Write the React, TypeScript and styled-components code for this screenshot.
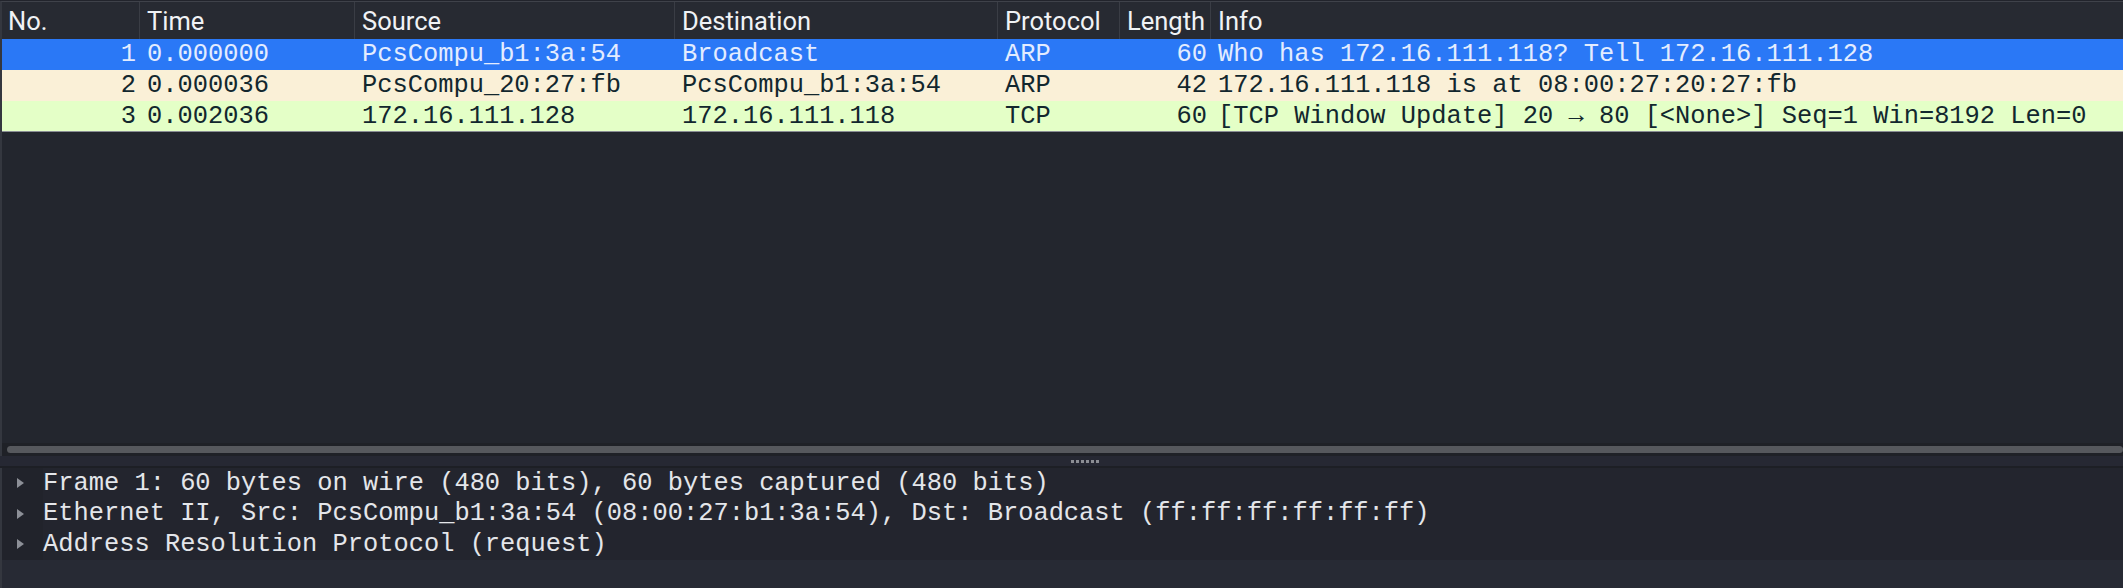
import styled, { createGlobalStyle } from "styled-components";

const GlobalStyle = createGlobalStyle`
    html, body {
        margin: 0;
        padding: 0;
        background: #22242c;
        overflow: hidden;
    }
`;

const COLUMNS = "137px 215px 320px 323px 122px 91px 1fr";

const Page = styled.div`
    width: 2123px;
    height: 588px;
    display: flex;
    flex-direction: column;
    background: #22242c;
    padding-top: 1px;
    box-sizing: border-box;
`;

const ListPane = styled.div`
    height: 455px;
    display: flex;
    flex-direction: column;
    border-top: 1px solid #3f424a;
    border-left: 2px solid #34373f;
    background: #23262e;
    box-sizing: border-box;
`;

const Header = styled.div`
    display: grid;
    grid-template-columns: ${COLUMNS};
    height: 37px;
    background: #272a32;
`;

const HeaderCell = styled.div<{ $first?: boolean }>`
    display: flex;
    align-items: center;
    padding-left: ${(p) => (p.$first ? "6px" : "7px")};
    border-left: ${(p) => (p.$first ? "none" : "1px solid #3a3d45")};
    font-family: Roboto, "Noto Sans", sans-serif;
    font-size: 25.5px;
    color: #f0f2f5;
    white-space: nowrap;
    overflow: hidden;
`;

const Rows = styled.div`
    flex: 1;
    display: flex;
    flex-direction: column;
`;

const Row = styled.div<{ $bg: string; $fg: string; $last?: boolean }>`
    display: grid;
    grid-template-columns: ${COLUMNS};
    height: 31px;
    box-sizing: border-box;
    background: ${(p) => p.$bg};
    color: ${(p) => p.$fg};
    border-bottom: ${(p) => (p.$last ? "1px solid #8a8e94" : "none")};
`;

const Cell = styled.div<{ $right?: boolean }>`
    display: flex;
    align-items: center;
    justify-content: ${(p) => (p.$right ? "flex-end" : "flex-start")};
    padding: ${(p) => (p.$right ? "0 3px 0 0" : "0 0 0 8px")};
    font-family: "Liberation Mono", "DejaVu Sans Mono", monospace;
    font-size: 25.4px;
    white-space: pre;
    overflow: hidden;
`;

const HScroll = styled.div`
    height: 13px;
    padding: 3px 0 3px 5px;
    box-sizing: border-box;
    background: #1f2127;
`;

const HScrollHandle = styled.div`
    height: 7px;
    border-radius: 4px;
    background: #56585d;
`;

const Splitter = styled.div`
    height: 10px;
    display: flex;
    align-items: center;
    justify-content: center;
    padding-left: 46px;
    background: #262833;
    border-bottom: 2px solid #1d1f25;
`;

const Grip = styled.div`
    display: flex;
    gap: 2px;
`;

const GripDot = styled.span`
    width: 3px;
    height: 3px;
    background: #8b8d93;
`;

const DetailPane = styled.div`
    flex: 1;
    display: flex;
    flex-direction: column;
    border-left: 2px solid #34373f;
    background: #272a34;
`;

const Tree = styled.div`
    background: #21232b;
    display: flex;
    flex-direction: column;
`;

const TreeRow = styled.div`
    height: 30.5px;
    display: flex;
    align-items: center;
`;

const Expander = styled.div`
    width: 41px;
    align-self: stretch;
    display: flex;
    align-items: center;
    padding-left: 15px;
    box-sizing: border-box;
`;

const Arrow = styled.span`
    width: 0;
    height: 0;
    border-top: 5px solid transparent;
    border-bottom: 5px solid transparent;
    border-left: 7px solid #8c8f97;
`;

const TreeText = styled.div`
    flex: 1;
    align-self: stretch;
    display: flex;
    align-items: center;
    background: #23252e;
    font-family: "Liberation Mono", "DejaVu Sans Mono", monospace;
    font-size: 25.4px;
    color: #e4e6ea;
    white-space: pre;
`;

const headers = ["No.", "Time", "Source", "Destination", "Protocol", "Length", "Info"];

const packets = [
    {
        no: "1",
        time: "0.000000",
        src: "PcsCompu_b1:3a:54",
        dst: "Broadcast",
        proto: "ARP",
        len: "60",
        info: "Who has 172.16.111.118? Tell 172.16.111.128",
        bg: "#2a78f6",
        fg: "#e3ecff",
    },
    {
        no: "2",
        time: "0.000036",
        src: "PcsCompu_20:27:fb",
        dst: "PcsCompu_b1:3a:54",
        proto: "ARP",
        len: "42",
        info: "172.16.111.118 is at 08:00:27:20:27:fb",
        bg: "#faf0d7",
        fg: "#12272e",
    },
    {
        no: "3",
        time: "0.002036",
        src: "172.16.111.128",
        dst: "172.16.111.118",
        proto: "TCP",
        len: "60",
        info: "[TCP Window Update] 20 \u2192 80 [<None>] Seq=1 Win=8192 Len=0",
        bg: "#e4ffc7",
        fg: "#12272e",
    },
];

const details = [
    "Frame 1: 60 bytes on wire (480 bits), 60 bytes captured (480 bits)",
    "Ethernet II, Src: PcsCompu_b1:3a:54 (08:00:27:b1:3a:54), Dst: Broadcast (ff:ff:ff:ff:ff:ff)",
    "Address Resolution Protocol (request)",
];

function App() {
    return (
        <>
            <GlobalStyle />
            <Page>
                <ListPane>
                    <Header>
                        {headers.map((h, i) => (
                            <HeaderCell key={h} $first={i === 0}>
                                {h}
                            </HeaderCell>
                        ))}
                    </Header>
                    <Rows>
                        {packets.map((p, i) => (
                            <Row
                                key={p.no}
                                $bg={p.bg}
                                $fg={p.fg}
                                $last={i === packets.length - 1}
                            >
                                <Cell $right>{p.no}</Cell>
                                <Cell>{p.time}</Cell>
                                <Cell>{p.src}</Cell>
                                <Cell>{p.dst}</Cell>
                                <Cell>{p.proto}</Cell>
                                <Cell $right>{p.len}</Cell>
                                <Cell>{p.info}</Cell>
                            </Row>
                        ))}
                    </Rows>
                    <HScroll>
                        <HScrollHandle />
                    </HScroll>
                </ListPane>
                <Splitter>
                    <Grip>
                        {[0, 1, 2, 3, 4, 5].map((d) => (
                            <GripDot key={d} />
                        ))}
                    </Grip>
                </Splitter>
                <DetailPane>
                    <Tree>
                        {details.map((d) => (
                            <TreeRow key={d}>
                                <Expander>
                                    <Arrow />
                                </Expander>
                                <TreeText>{d}</TreeText>
                            </TreeRow>
                        ))}
                    </Tree>
                </DetailPane>
            </Page>
        </>
    );
}

export default App;
